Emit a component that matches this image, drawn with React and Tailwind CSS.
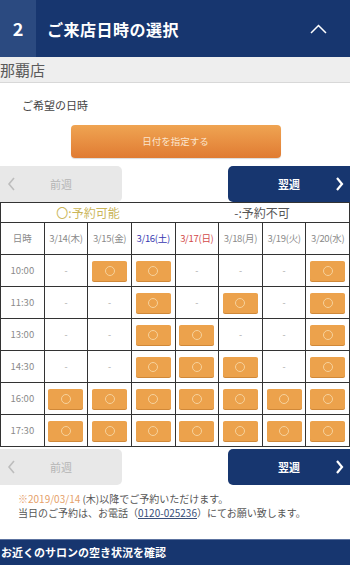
import React from "react";

const days = [
  { l: "3/14(木)", c: "text-[#8a8a8a]" },
  { l: "3/15(金)", c: "text-[#8a8a8a]" },
  { l: "3/16(土)", c: "text-[#3838b0]" },
  { l: "3/17(日)", c: "text-[#d24a4a]" },
  { l: "3/18(月)", c: "text-[#8a8a8a]" },
  { l: "3/19(火)", c: "text-[#8a8a8a]" },
  { l: "3/20(水)", c: "text-[#8a8a8a]" },
];

const rows = [
  { t: "10:00", a: [0, 1, 1, 0, 0, 0, 1] },
  { t: "11:30", a: [0, 0, 1, 0, 1, 0, 1] },
  { t: "13:00", a: [0, 0, 1, 1, 0, 0, 1] },
  { t: "14:30", a: [0, 0, 1, 1, 1, 0, 1] },
  { t: "16:00", a: [1, 1, 1, 1, 1, 1, 1] },
  { t: "17:30", a: [1, 1, 1, 1, 1, 1, 1] },
];

function Slot() {
  return (
    <div className="mx-auto flex h-[20px] w-[35px] items-center justify-center rounded-[2px] bg-[#eca24c] shadow-[0_1px_0_#d08838]">
      <div className="h-[10px] w-[10px] rounded-full border border-[#f7d29c]" />
    </div>
  );
}

function NavButtons() {
  return (
    <div className="flex h-[36px] justify-between">
      <div className="relative flex w-[122px] items-center justify-center rounded-r-[5px] bg-[#e8e8e8]">
        <svg className="absolute left-[7px] top-[11px]" width="9" height="14" viewBox="0 0 9 14">
          <path d="M7 1 L2 7 L7 13" fill="none" stroke="#bdbdbd" strokeWidth="1.6" />
        </svg>
        <span className="text-[11px] text-[#b5b5b5]">前週</span>
      </div>
      <div className="relative flex w-[122px] items-center justify-center rounded-l-[5px] bg-[#17366f]">
        <span className="text-[11px] font-bold text-white">翌週</span>
        <svg className="absolute right-[6px] top-[11px]" width="9" height="14" viewBox="0 0 9 14">
          <path d="M2 1 L7 7 L2 13" fill="none" stroke="#ffffff" strokeWidth="2.2" />
        </svg>
      </div>
    </div>
  );
}

export default function App() {
  return (
    <div
      className="h-[566px] w-[350px] overflow-hidden bg-white"
      style={{ fontFamily: '"Noto Sans CJK JP", "Noto Sans", sans-serif' }}
    >
      {/* header */}
      <div className="flex h-[57px] bg-[#17366f]">
        <div className="flex w-[36px] items-center justify-center bg-[#2b4a80] text-[18px] font-bold text-white">
          2
        </div>
        <div className="flex flex-1 items-center pl-[11px] text-[16px] font-bold tracking-[0.5px] text-white">
          ご来店日時の選択
        </div>
        <div className="flex w-[40px] items-center justify-start">
          <svg width="17" height="10" viewBox="0 0 17 10">
            <path d="M1 9 L8.5 1.5 L16 9" fill="none" stroke="#ffffff" strokeWidth="1.5" />
          </svg>
        </div>
      </div>
      {/* store */}
      <div className="flex h-[26px] items-center border-b border-[#d8d8d8] bg-[#eeeeee] text-[15px] leading-none text-[#5a5a5a]">
        那覇店
      </div>
      {/* preferred */}
      <div className="pl-[22px] pt-[15px] text-[11px] leading-[14px] text-[#444]">ご希望の日時</div>
      <div className="mt-[13px] flex justify-center pl-[1px]">
        <div className="flex h-[33px] w-[210px] items-center justify-center rounded-[4px] bg-gradient-to-b from-[#efa452] to-[#e07b32] text-[9.5px] text-[#fbe6cf] shadow-[0_1px_1px_rgba(0,0,0,0.15)]">
          日付を指定する
        </div>
      </div>
      <div className="mt-[8px]">
        <NavButtons />
      </div>
      {/* table */}
      <table className="w-[350px] table-fixed border-collapse">
        <tbody>
          <tr className="h-[20px]">
            <td colSpan={4} className="border-y border-l border-[#333] p-0 text-center text-[12px] leading-none text-[#cbb65a]">
              〇:予約可能
            </td>
            <td colSpan={4} className="border-y border-r border-[#333] p-0 text-center text-[12px] leading-none text-[#555]">
              -:予約不可
            </td>
          </tr>
          <tr className="h-[32px]">
            <td className="border border-[#333] p-0 text-center text-[9.5px] text-[#8a8a8a]">日時</td>
            {days.map((d) => (
              <td key={d.l} className={`border border-[#333] p-0 text-center text-[9.5px] tracking-[-0.3px] ${d.c}`}>
                {d.l}
              </td>
            ))}
          </tr>
          {rows.map((r) => (
            <tr key={r.t} className="h-[32px]">
              <td className="border border-[#333] p-0 text-center text-[9.5px] text-[#8a8a8a]">{r.t}</td>
              {r.a.map((v, i) => (
                <td key={i} className="border border-[#333] p-0 text-center text-[9px] text-[#aaa]">
                  {v ? <Slot /> : "-"}
                </td>
              ))}
            </tr>
          ))}
        </tbody>
      </table>
      <div className="mt-[2px]">
        <NavButtons />
      </div>
      <div className="pl-[18px] pt-[7px] text-[10px] leading-[14px] text-[#555]">
        <div>
          <span className="text-[#e6a16a]">※2019/03/14</span> (木)以降でご予約いただけます。
        </div>
        <div>
          当日のご予約は、お電話（<span className="text-[#3a4f7a] underline">0120-025236</span>）にてお願い致します。
        </div>
      </div>
      <div className="mt-[19px] flex h-[26px] items-center border-t border-[#5c73a0] bg-[#17366f] pl-[1px] text-[11px] font-bold text-white">
        お近くのサロンの空き状況を確認
      </div>
    </div>
  );
}
